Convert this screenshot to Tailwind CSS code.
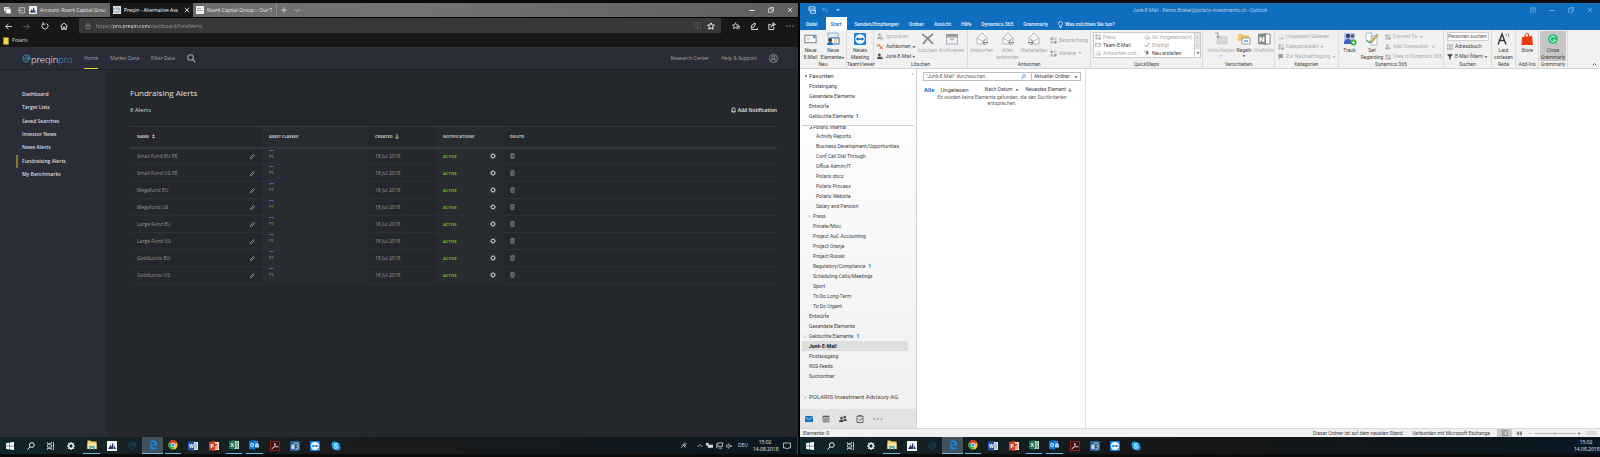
<!DOCTYPE html>
<html lang="de">
<head>
<meta charset="utf-8">
<title>Desktop</title>
<script src="https://cdn.jsdelivr.net/npm/@tailwindcss/browser@4"></script>
</head>
<body class="bg-[#0b0b0b] font-['Open_Sans','Noto_Sans',sans-serif] text-[5px] leading-[7px]">
<svg class="hidden">
  <symbol id="mail" viewBox="0 0 14 12"><rect x="1" y="2" width="12" height="8" fill="#fff" stroke="#777"/><path d="M3 5h4M3 7h3" stroke="#bbb"/><rect x="10" y="3" width="2" height="2" fill="#1673c4"/></symbol>
  <symbol id="reply" viewBox="0 0 14 14"><path d="M2 6l5-5 5 5v6H2z" fill="#f8f8f8" stroke="#b5b5b5"/><path d="M2 6l5 3 5-3" fill="none" stroke="#b5b5b5"/><path d="M10 8l-2.500 2.500L10 13M8 10.500h5" fill="none" stroke="#8c8c8c"/></symbol>
  <symbol id="person" viewBox="0 0 8 8"><circle cx="3" cy="2" r="1.6" fill="currentColor"/><path d="M0 7q0-3 3-3t3 3z" fill="currentColor"/><circle cx="6" cy="6" r="1.3" fill="none" stroke="currentColor" stroke-width=".7"/></symbol>
  <symbol id="grid" viewBox="0 0 8 8"><rect x=".5" y=".5" width="3" height="3" fill="#aaa"/><rect x="4.500" y=".5" width="3" height="3" fill="#ccc"/><rect x=".5" y="4.500" width="3" height="3" fill="#bbb"/><rect x="4.500" y="4.500" width="3" height="3" fill="#999"/></symbol>
  <symbol id="win" viewBox="0 0 8 8"><path d="M0 1.200l3.600-.6v3.200H0zM4 .5L8 0v3.800H4zM0 4.200h3.600v3.200L0 6.900zM4 4.200h4V8l-4-.5z" fill="#fff"/></symbol>
  <symbol id="lens" viewBox="0 0 8 8"><circle cx="4.800" cy="3" r="2.400" fill="none" stroke="currentColor" stroke-width=".9"/><path d="M3 4.800L.6 7.400" stroke="currentColor"/></symbol>
  <symbol id="task" viewBox="0 0 8 8"><path d="M.5 0v1.500h4V0M.5 8V6.500h4V8M.5 2.800h4v2.400h-4zM6.500 0v8M5.800 3.500h1.400" fill="none" stroke="#ddd" stroke-width=".8"/></symbol>
  <symbol id="gear" viewBox="0 0 8 8"><circle cx="4" cy="4" r="2.300" fill="none" stroke="currentColor" stroke-width="1.300"/><path d="M4 0v1.500M4 6.500V8M0 4h1.500M6.500 4H8M1.200 1.200l1 1M5.800 5.800l1 1M6.800 1.200l-1 1M2.200 5.800l-1 1" stroke="currentColor" stroke-width="1.200"/></symbol>
  <symbol id="explorer" viewBox="0 0 10 9"><path d="M.5 0h3l1 1h5v7.500h-9z" fill="#f4cf63"/><path d="M.5 2.500h9v6h-9z" fill="#fbe493"/><path d="M2.500 9V5.500h5V9H6V7H4v2z" fill="#3fa0dc"/></symbol>
  <symbol id="peaks" viewBox="0 0 10 10"><rect width="10" height="10" fill="#eef1f5"/><path d="M1 8l2.500-4L5 6V2l1.500 1.500L9 8z" fill="#20355c"/><path d="M6.500 3v5" stroke="#eef1f5" stroke-width=".6"/></symbol>
  <symbol id="at" viewBox="0 0 10 10"><circle cx="5" cy="5" r="1.800" fill="none" stroke="currentColor" stroke-width=".9"/><path d="M7 3v3q1 1.400 2-.6A4 4 0 1 0 7 8.500" fill="none" stroke="currentColor" stroke-width=".9"/></symbol>
  <symbol id="edge" viewBox="0 0 10 10"><path d="M.8 4.800C1 1.800 3 .3 5.200.3 8 .3 9.400 2.500 9.300 5.600H3.600c.2 2.400 3 2.600 5.100 1.400v2C5.500 10.400 1.600 9.600 1.700 6c.1-1.500 1-2.400 2.300-3-.4.500-.5.900-.5 1.300h3.300c.1-2.600-4-2.700-6 .5z" fill="#1283e0"/></symbol>
  <symbol id="chrome" viewBox="0 0 10 10"><circle cx="5" cy="5" r="4.600" fill="#f3c91f"/><path d="M5 5L1 2.700A4.600 4.600 0 0 1 9 2.700z" fill="#e0402f"/><path d="M1 2.700A4.600 4.600 0 0 0 4.800 9.600L6.500 6z" fill="#2ea350"/><path d="M1 2.700L5 5l4-2.300z" fill="#e0402f"/><circle cx="5" cy="5" r="2.200" fill="#fff"/><circle cx="5" cy="5" r="1.600" fill="#3e7fe8"/></symbol>
  <symbol id="acro" viewBox="0 0 10 10"><rect x=".4" y=".4" width="9.200" height="9.200" fill="#3a0b0c" stroke="#a3262a" stroke-width=".8"/><path d="M1.800 7.800C4 7 5.600 4 4.800 2c-.6 1.500 1 4 3.400 3.800C6 5.500 3.500 6 1.800 7.800" fill="none" stroke="#e8e8e8" stroke-width=".7"/></symbol>
  <symbol id="blueapp" viewBox="0 0 10 10"><rect width="10" height="10" rx="1" fill="#2c6098"/><path d="M1.500 3.500h3V8h-3z" fill="#c7dced"/><path d="M4 2.200h3.500a1.500 1.500 0 0 1 0 2.800H6.500M5.500 8H7a1.500 1.500 0 0 0 0-3" fill="none" stroke="#c7dced" stroke-width=".9"/></symbol>
  <symbol id="tv" viewBox="0 0 10 10"><rect width="10" height="10" rx="1" fill="#1480e6"/><circle cx="5" cy="5" r="4" fill="#fff"/><path d="M1.500 5l2-1.600v1h3v-1l2 1.600-2 1.600v-1h-3v1z" fill="#0d66c4"/></symbol>
  <symbol id="skype" viewBox="0 0 10 10"><circle cx="3.400" cy="3.400" r="2.900" fill="#16a5e8"/><circle cx="6.600" cy="6.600" r="2.900" fill="#16a5e8"/><circle cx="5" cy="5" r="4" fill="#16a5e8"/><path d="M6.800 3.500C6 2.300 3.300 2.500 3.400 3.900 3.500 5.200 6.700 4.700 6.700 6.200 6.600 7.700 3.800 7.700 3.200 6.300" fill="none" stroke="#fff"/></symbol>
  <symbol id="word" viewBox="0 0 10 10"><rect x="5" y="1" width="5" height="8" fill="#dfe8f6"/><path d="M6 3h3M6 5h3M6 7h3" stroke="#2b579a" stroke-width=".6"/><path d="M0 1l6-1v10L0 9z" fill="#2b579a"/><text x="1" y="7" font-size="5" font-weight="700" fill="#fff">W</text></symbol>
  <symbol id="ppt" viewBox="0 0 10 10"><rect x="5" y="1" width="5" height="8" fill="#f9e1da"/><circle cx="7" cy="4" r="1.500" fill="#d24726"/><path d="M6 7h3" stroke="#d24726"/><path d="M0 1l6-1v10L0 9z" fill="#d24726"/><text x="1.500" y="7" font-size="5" font-weight="700" fill="#fff">P</text></symbol>
  <symbol id="excel" viewBox="0 0 10 10"><rect x="5" y="1" width="5" height="8" fill="#dcefe3"/><path d="M6 3h3.500M6 5h3.500M6 7h3.500M8 1v8" stroke="#217346" stroke-width=".6"/><path d="M0 1l6-1v10L0 9z" fill="#217346"/><text x="1.500" y="7" font-size="5" font-weight="700" fill="#fff">X</text></symbol>
  <symbol id="olk" viewBox="0 0 10 10"><path d="M5 1h4v3H5z" fill="#2a8ad4"/><path d="M5 3.500h5v4H5z" fill="#e6f1fb" stroke="#1b78cc" stroke-width=".5"/><path d="M5 4l3 2 2-2" fill="none" stroke="#1b78cc" stroke-width=".6"/><path d="M0 1l6-1v10L0 9z" fill="#0f70c8"/><text x="1" y="7" font-size="5" font-weight="700" fill="#fff">O</text></symbol>
  <symbol id="pencil" viewBox="0 0 6 6"><path d="M.6 5.400l.4-1.600L4.200.6l1.200 1.200L2.200 5z" fill="none" stroke="currentColor" stroke-width=".8"/></symbol>
  <symbol id="trash" viewBox="0 0 6 7"><path d="M.3 1.300h5.400M2 1V.4h2V1M1 1.500l.3 5h3.400l.3-5M2.300 2.500v3M3.700 2.500v3" fill="none" stroke="currentColor" stroke-width=".7"/></symbol>
  <symbol id="sort" viewBox="0 0 4 6"><path d="M0 2.500L2 .2l2 2.300zM0 3.500h4L2 5.800z" fill="#ddd"/></symbol>
  <symbol id="star" viewBox="0 0 8 8"><path d="M4 .8l1 2.200 2.400.2-1.800 1.600.6 2.400L4 6 1.800 7.200l.6-2.400L.6 3.200 3 3z" fill="none" stroke="currentColor" stroke-width=".9"/></symbol>
  <symbol id="restore" viewBox="0 0 6 6"><path d="M.5 1.800h3.600v3.600H.5zM1.800 1.600V.5h3.700v3.700H4.300" fill="none" stroke="currentColor" stroke-width=".7"/></symbol>
  <symbol id="x" viewBox="0 0 6 6"><path d="M.8.8l4.400 4.400M5.200.8L.8 5.200" stroke="currentColor" stroke-width=".8"/></symbol>
  <symbol id="min" viewBox="0 0 6 6"><path d="M.5 3.500h5" stroke="currentColor"/></symbol>
  <symbol id="tri" viewBox="0 0 4 4"><path d="M.6 3.600h3V.6z" fill="#333"/></symbol>
  <symbol id="open" viewBox="0 0 4 4"><path d="M1.200.3L3 2 1.200 3.700z" fill="none" stroke="#999" stroke-width=".5"/></symbol>
  <symbol id="dn" viewBox="0 0 4 4"><path d="M.5 1.200h3L2 3z" fill="currentColor"/></symbol>
  <symbol id="page" viewBox="0 0 8 8"><rect x=".5" y=".5" width="7" height="7" fill="#f7d34e"/></symbol>
</svg>

<main class="flex min-h-[457px] pt-[3px] pb-[3px]">

<!-- Browser window -->
<section class="flex w-1/2 min-w-0 flex-col border-r-2 border-black text-[#d6d6d6]" aria-label="Browser">
  <div class="flex h-[14px] items-stretch bg-linear-to-r from-[#626262] via-[#747474] to-[#5e5e5e] text-[#e8e8e8]">
    <div class="flex w-[28px] items-center justify-around">
      <svg class="size-[7px]" viewBox="0 0 8 8"><path d="M0 0h6v5H0z" fill="#ddd"/><path d="M2 2h6v5.500H2z" fill="#fff" stroke="#666" stroke-width=".5"/></svg>
      <svg class="size-[7px]" viewBox="0 0 8 8"><path d="M1.500 2V.8h6v6h-6V5.500M5.500 3.800H.5M2.300 2L.5 3.800l1.800 1.800" fill="none" stroke="#ddd" stroke-width=".8"/></svg>
    </div>
    <button class="flex w-[82px] items-center gap-[3px] whitespace-nowrap px-[1px] text-left"><svg class="size-[8px] shrink-0"><use href="#peaks"/></svg>Account: Roark Capital Grou</button>
    <div class="flex w-[83px] items-center gap-[3px] bg-[#171717] px-[3px] text-white">
      <svg class="size-[8px] shrink-0" viewBox="0 0 8 8"><rect width="8" height="8" fill="#ddd"/><path d="M1 2h5v4H1zM3 3h4" fill="none" stroke="#8ab"/></svg>
      <button class="w-[58px] whitespace-nowrap text-left">Preqin - Alternative Ass</button>
      <button class="size-[6px]" aria-label="Tab schliessen"><svg class="size-[6px]"><use href="#x"/></svg></button>
    </div>
    <button class="flex w-[84px] items-center gap-[3px] whitespace-nowrap border-r border-[#8a8a8a] px-[3px] text-left"><svg class="size-[8px] shrink-0" viewBox="0 0 8 8"><rect width="8" height="8" fill="#eee"/><path d="M1 2.500h4M1 4.500h6" stroke="#aaa"/></svg>Roark Capital Group :: Our T</button>
    <button class="w-[13px]" aria-label="Neuer Tab"><svg class="mx-auto size-[6px]" viewBox="0 0 6 6"><path d="M3 .3v5.400M.3 3h5.400" stroke="#ddd" stroke-width=".8"/></svg></button>
    <button class="w-[13px]" aria-label="Tabliste"><svg class="mx-auto size-[6px]" viewBox="0 0 6 6"><path d="M.5 2L3 4.500 5.500 2" fill="none" stroke="#ccc" stroke-width=".8"/></svg></button>
    <div class="ml-auto flex items-center gap-[13px] pr-[5px]">
      <button aria-label="Minimieren"><svg class="size-[6px]"><use href="#min"/></svg></button>
      <button aria-label="Wiederherstellen"><svg class="size-[6px]"><use href="#restore"/></svg></button>
      <button aria-label="Schliessen"><svg class="size-[6px]"><use href="#x"/></svg></button>
    </div>
  </div>
  <div class="flex h-[17px] items-stretch border-t border-black bg-[#171717]">
    <div class="flex w-[79px] items-center gap-[11px] pl-[5px]">
      <button aria-label="Zurück"><svg class="size-[7px]" viewBox="0 0 8 8"><path d="M8 4H1M4 .8L.8 4 4 7.200" fill="none" stroke="#e6e6e6"/></svg></button>
      <button aria-label="Vorwärts"><svg class="size-[7px]" viewBox="0 0 8 8"><path d="M0 4h7M4 .8L7.200 4 4 7.200" fill="none" stroke="#5a5a5a"/></svg></button>
      <button aria-label="Neu laden"><svg class="size-[8px]" viewBox="0 0 8 8"><path d="M5.500 1.400A3 3 0 1 1 2 1.800M2 0v2.200h2.200" fill="none" stroke="#e6e6e6" stroke-width=".9"/></svg></button>
      <button aria-label="Startseite"><svg class="size-[8px]" viewBox="0 0 8 8"><path d="M.6 4L4 1l3.400 3M1.600 3.400v4h1.700V5h1.400v2.400h1.700v-4" fill="none" stroke="#e6e6e6" stroke-width=".9"/></svg></button>
    </div>
    <div class="mb-[1px] flex flex-1 items-center bg-[#383838] pl-[6px] pr-[6px]">
      <svg class="mr-[5px] size-[6px]" viewBox="0 0 6 6"><path d="M1 2.500h4v3H1zM1.800 2.500V1.200Q3-.2 4.200 1.200v1.300" fill="none" stroke="#999" stroke-width=".6"/></svg>
      <input aria-label="Adresse" class="h-[10px] min-w-0 flex-1 bg-[linear-gradient(to_right,#a0a0a0_17px,#fff_17px,#fff_54px,#a0a0a0_54px)] bg-clip-text text-transparent" value="https://pro.preqin.com/dashboard/fundAlerts">
      <svg class="mr-[6px] size-[7px]" viewBox="0 0 8 8"><path d="M.5 1h7v6h-7zM4 1v6" fill="none" stroke="#5c5c5c" stroke-width=".8"/></svg>
      <button class="text-white" aria-label="Favorit"><svg class="size-[8px]"><use href="#star"/></svg></button>
    </div>
    <div class="flex items-center gap-[10px] pl-[11px] pr-[4px]">
      <button aria-label="Favoriten"><svg class="size-[8px]" viewBox="0 0 8 8"><path d="M3.500.8l.9 2 2.100.2L5 4.500l.4 2.200-1.900-1.200-1.900 1.200.4-2.200L.5 3l2.100-.2zM5.500 4.500H8M6 6h2" fill="none" stroke="#eee" stroke-width=".8"/></svg></button>
      <button aria-label="Notiz"><svg class="size-[8px]" viewBox="0 0 8 8"><path d="M1 6l1-3 3-2 .5 1L4 5 2 6zM1 7.500h6.500V6" fill="none" stroke="#eee" stroke-width=".9"/></svg></button>
      <button aria-label="Teilen"><svg class="size-[8px]" viewBox="0 0 8 8"><path d="M3 2.500H.8v5h5V5M3 5.500Q3 2.500 6 2.500M5 .8l2.500 1.700L5 4.200z" fill="none" stroke="#eee" stroke-width=".9"/></svg></button>
      <button aria-label="Mehr"><svg class="size-[8px]" viewBox="0 0 8 8"><path d="M.5 4h1.300M3.400 4h1.300M6.300 4h1.300" stroke="#aaa"/></svg></button>
    </div>
  </div>
  <div class="flex h-[14px] items-center gap-[3px] border-b border-[#2e2f33] bg-[#171717] pl-[3px]"><svg class="h-[8px] w-[6px]" preserveAspectRatio="none" viewBox="0 0 8 8"><use href="#page"/></svg><a href="#">Polaris</a></div>

  <header class="flex h-[22px] items-stretch border-b border-[#1f2126] bg-[#2a2c37] pl-[22px] pr-[20px] text-[#a6a8ad]">
    <a href="#" class="mr-[12px] flex w-[50px] items-center text-[10px] leading-[12px]" aria-label="preqin pro"><svg class="size-[9px] shrink-0 text-[#3ba5cf]"><use href="#at"/></svg><span class="font-['Lato',sans-serif] font-light text-white">preqin<span class="text-[#3ba5cf]">pro</span></span></a>
    <nav class="flex gap-[12px] leading-[20px]">
      <a href="#" class="border-b border-[#f2d32c]">Home</a>
      <a href="#">Market Data</a>
      <a href="#">Filter Data</a>
      <button aria-label="Suchen"><svg class="size-[9px] -scale-x-100"><use href="#lens" /></svg></button>
    </nav>
    <div class="ml-auto flex items-center gap-[12px]">
      <a href="#">Research Center</a><a href="#">Help &amp; Support</a>
      <button aria-label="Konto"><svg class="size-[9px]" viewBox="0 0 9 9"><circle cx="4.500" cy="4.500" r="4" fill="none" stroke="#aaa" stroke-width=".7"/><circle cx="4.500" cy="3.500" r="1.400" fill="none" stroke="#aaa" stroke-width=".7"/><path d="M2 7.500q0-2.500 2.500-2.500T7 7.500" fill="none" stroke="#aaa" stroke-width=".7"/></svg></button>
    </div>
  </header>
  <div class="flex flex-1 bg-[#24272b]">
    <aside class="w-[107px] bg-[#2a2c36] pt-[18px] font-semibold text-[#dcdde0]">
      <nav class="flex h-[93px] flex-col justify-between pl-[16px] leading-[13px] *:border-l-2 *:pl-[4px]">
        <a href="#" class="border-transparent">Dashboard</a>
        <a href="#" class="border-transparent">Target Lists</a>
        <a href="#" class="border-transparent">Saved Searches</a>
        <a href="#" class="border-transparent">Investor News</a>
        <a href="#" class="border-transparent">News Alerts</a>
        <a href="#" class="border-[#857a35]">Fundraising Alerts</a>
        <a href="#" class="border-transparent">My Benchmarks</a>
      </nav>
    </aside>
    <div class="flex-1 pl-[23px] pr-[21px] pt-[16px]">
      <h1 class="text-[8px] leading-[14px] text-[#e4e4e4]">Fundraising Alerts</h1>
      <div class="mb-[11px] mt-[5px] flex items-center justify-between leading-[10px]">
        <p class="text-[6px]">8 Alerts</p>
        <button class="flex items-center gap-[2px] font-semibold text-[#ececec]"><svg class="h-[6px] w-[5px]" viewBox="0 0 5 6"><path d="M1 4.500V1.500Q2.500-.3 4 1.500v3M.2 4.700h4.600M2 5.600h1" fill="none" stroke="#eee" stroke-width=".8"/></svg>Add Notification</button>
      </div>
      <table class="w-full table-fixed border-collapse text-left text-[#96989c]">
        <colgroup><col class="w-[132px]"><col class="w-[106px]"><col class="w-[68px]"><col class="w-[67px]"><col></colgroup>
        <thead class="text-[4px] text-[#c4c5c7]">
          <tr class="h-[21px] border-b-2 border-t border-b-[#34373c] border-t-[#36393d]">
            <th class="pl-[7px]"><button class="flex items-center gap-[3px] font-bold">NAME <svg class="h-[5px] w-[3px]"><use href="#sort"/></svg></button></th>
            <th class="bg-[#282b2f] pl-[7px]">ASSET CLASSES</th>
            <th class="pl-[7px]"><button class="flex items-center gap-[2px] font-bold">CREATED <svg class="h-[5px] w-[4px]" viewBox="0 0 4 5"><path d="M2 0v4.500M.3 3L2 4.600 3.700 3" fill="none" stroke="#ddd" stroke-width=".8"/></svg></button></th>
            <th class="bg-[#282b2f] pl-[7px]">NOTIFICATIONS</th>
            <th class="pl-[7px]">DELETE</th>
          </tr>
        </thead>
        <tbody id="alerts"></tbody>
      </table>
    </div>
  </div>
  <div class="taskbar flex h-[17px] bg-linear-to-r from-[#10242a] via-[#1a1a1a] to-[#081822]" data-tray="full"></div>
</section>

<!-- Mail window -->
<section class="flex w-1/2 min-w-0 flex-col bg-white font-['Roboto','Open_Sans',sans-serif] text-[#444]" aria-label="Outlook">
  <div class="bg-[#106ebe] text-[#e9f2fa]">
    <div class="grid h-[14px] grid-cols-3 items-center text-[#a9cdec]">
      <div class="flex items-center gap-[6px] pl-[8px]">
        <button aria-label="Senden und Empfangen"><svg class="size-[8px]" viewBox="0 0 8 8"><path d="M1 .8h6v4H1zM1 3h6M2.500 5v2.300h5V4.500H5" fill="none" stroke="#d8e9f7" stroke-width=".8"/></svg></button>
        <button aria-label="Rückgängig"><svg class="size-[6px]" viewBox="0 0 6 6"><path d="M2.200.5L.5 2.200l1.700 1.700M.6 2.200H4Q6 3.500 4 5.500" fill="none" stroke="#5fa3dc" stroke-width=".8"/></svg></button>
        <button aria-label="Anpassen" class="pl-[2px] text-white"><svg class="size-[4px]"><use href="#dn"/></svg></button>
      </div>
      <h2 class="whitespace-nowrap text-center">Junk-E-Mail - Fenno.Brakel@polaris-investments.ch - Outlook</h2>
      <div class="flex items-center justify-end gap-[13px] pr-[7px] text-[#78b2e2]">
        <button aria-label="Menüband"><svg class="size-[6px]" viewBox="0 0 6 6"><path d="M.4.800h5.200v4.400H.4zM.4 2h5.200M3 4.600V2.800" fill="none" stroke="currentColor" stroke-width=".6"/></svg></button>
        <button aria-label="Minimieren"><svg class="size-[6px]"><use href="#min"/></svg></button>
        <button aria-label="Wiederherstellen"><svg class="size-[6px]"><use href="#restore"/></svg></button>
        <button aria-label="Schliessen"><svg class="size-[6px]"><use href="#x"/></svg></button>
      </div>
    </div>
    <nav class="flex h-[13px] items-stretch pl-[1px] font-medium *:px-[5px] *:pt-[1px]">
      <button>Datei</button>
      <button class="mx-[3px] bg-white text-[#106ebe]">Start</button>
      <button>Senden/Empfangen</button>
      <button>Ordner</button>
      <button>Ansicht</button>
      <button>Hilfe</button>
      <button>Dynamics 365</button>
      <button>Grammarly</button>
      <button class="flex items-center gap-[2px]"><svg class="h-[7px] w-[5px]" viewBox="0 0 5 7"><path d="M1.500 4.500Q-.4 2.500 1 1q1.500-1.200 3 0 1.400 1.500-.5 3.500v1h-2zM1.700 6.500h1.600" fill="none" stroke="#fff" stroke-width=".7"/></svg>Was möchten Sie tun?</button>
    </nav>
  </div>

  <!-- Ribbon: each group holds a row of commands above its caption -->
  <div class="flex h-[39px] border-b border-[#d5d5d5] bg-[#f1f1f1] *:flex *:shrink-0 *:flex-col *:border-r *:border-[#dcdcdc]">
    <div class="w-[47px]">
      <div class="flex h-[31px] pt-[2px]">
        <button class="flex w-[21px] flex-col items-center text-center"><svg class="mb-[1px] h-[14px] w-[13px]"><use href="#mail"/></svg>Neue<br>E-Mail</button>
        <button class="flex w-[24px] flex-col items-center whitespace-nowrap text-center"><svg class="mb-[1px] size-[14px]" viewBox="0 0 14 14"><rect x="2" y="1" width="10" height="5" fill="#e3ecf5" stroke="#7aa7d0" stroke-width=".8"/><rect x="5" y="6" width="8" height="6" fill="#fff" stroke="#1673c4"/><circle cx="4" cy="8" r="2" fill="#444"/><path d="M1 13q0-3 3-3t3 3z" fill="#1673c4"/><path d="M8 8h3M8 10h3" stroke="#f0a030"/></svg>Neue<span class="flex items-center">Elemente<svg class="size-[4px]"><use href="#dn"/></svg></span></button>
      </div><span class="text-center">Neu</span>
    </div>
    <div class="w-[27px]">
      <div class="flex h-[31px] justify-center pt-[2px]">
        <button class="flex flex-col items-center text-center"><svg class="mb-[1px] h-[14px] w-[12px]"><use href="#tv"/></svg>Neues<br>Meeting</button>
      </div><span class="text-center">TeamViewer</span>
    </div>
    <div class="w-[94px]">
      <div class="flex h-[31px] pt-[2px]">
        <div class="flex w-[42px] flex-col justify-between whitespace-nowrap pl-[3px] leading-[9px] *:flex *:items-center *:gap-[1px]">
          <button class="text-[#b0b0b0]"><svg class="mr-[1px] size-[7px]"><use href="#person"/></svg>Ignorieren</button>
          <button><svg class="mr-[1px] size-[7px]" viewBox="0 0 8 8"><path d="M0 1h4v3H0z" fill="#f0b050"/><path d="M3 4l4 3M7 3L3 7" stroke="#d9502e"/></svg>Aufräumen<svg class="size-[4px]"><use href="#dn"/></svg></button>
          <button><svg class="mr-[1px] size-[7px]"><use href="#person"/></svg>Junk-E-Mail<svg class="size-[4px]"><use href="#dn"/></svg></button>
        </div>
        <button class="flex w-[23px] flex-col items-center text-[#a9a9a9]"><svg class="mb-[1px] size-[14px]" viewBox="0 0 14 14"><path d="M1 2q6 4 11 10M12 2Q6 6 2 12" fill="none" stroke="#8a8a8a" stroke-width="1.800"/></svg>Löschen</button>
        <button class="flex w-[25px] flex-col items-center text-[#a9a9a9]"><svg class="mb-[1px] size-[14px]" viewBox="0 0 14 14"><rect x="1" y="2" width="12" height="3" fill="#999"/><rect x="1.500" y="5" width="11" height="7" fill="#f0eaf2" stroke="#b8b0ba"/><path d="M5 7h4" stroke="#999"/></svg>Archivieren</button>
      </div><span class="text-center">Löschen</span>
    </div>
    <div class="w-[123px]">
      <div class="flex h-[31px] pt-[2px] text-[#a9a9a9]">
        <button class="flex w-[27px] flex-col items-center"><svg class="mb-[1px] size-[14px]"><use href="#reply"/></svg>Antworten</button>
        <button class="flex w-[25px] flex-col items-center"><svg class="mb-[1px] size-[14px]"><use href="#reply"/></svg>Allen<br>antworten</button>
        <button class="flex w-[28px] flex-col items-center"><svg class="mb-[1px] size-[14px] -scale-x-100"><use href="#reply"/></svg>Weiterleiten</button>
        <div class="flex flex-col justify-center gap-[4px] whitespace-nowrap pl-[2px] leading-[9px] *:flex *:items-center *:gap-[2px]">
          <button><svg class="size-[7px]"><use href="#grid"/></svg>Besprechung</button>
          <button><svg class="size-[7px]"><use href="#grid"/></svg>Weitere<svg class="size-[4px]"><use href="#dn"/></svg></button>
        </div>
      </div><span class="text-center">Antworten</span>
    </div>
    <div class="w-[112px]">
      <div class="flex h-[31px] pl-[2px] pr-[1px] pt-[2px]">
        <div class="grid h-[26px] flex-1 grid-cols-[49px_1fr] items-center whitespace-nowrap border border-[#c9c9c9] bg-white pl-[1px] leading-[8px] *:flex *:items-center *:gap-[2px]">
          <button class="text-[#a9a9a9]"><svg class="size-[6px]"><use href="#grid"/></svg>Press</button>
          <button class="text-[#a9a9a9]"><svg class="size-[6px]"><use href="#reply"/></svg>An Vorgesetzte(n)</button>
          <button><svg class="size-[6px]"><use href="#mail"/></svg>Team-E-Mail</button>
          <button class="text-[#a9a9a9]"><svg class="size-[6px]" viewBox="0 0 6 6"><path d="M.5 3L2.500 5 5.500.8" fill="none" stroke="#999"/></svg>Erledigt</button>
          <button class="text-[#a9a9a9]"><svg class="size-[6px]"><use href="#reply"/></svg>Antworten und...</button>
          <button><svg class="size-[6px]" viewBox="0 0 6 6"><path d="M3.500 0L1.500 3H3L2 6l3-3.500H3.500z" fill="#444"/><path d="M0 1h2" stroke="#f0b030"/></svg>Neu erstellen</button>
        </div>
        <div class="flex h-[26px] w-[6px] flex-col border border-l-0 border-[#c9c9c9] *:flex *:flex-1 *:items-center *:justify-center"><button aria-label="Nach oben" class="bg-[#e3e3e3] text-[#aaa]"><svg class="size-[3px] rotate-180"><use href="#dn"/></svg></button><button aria-label="Nach unten" class="bg-[#e3e3e3] text-[#aaa]"><svg class="size-[3px]"><use href="#dn"/></svg></button><button aria-label="Alle anzeigen" class="bg-white"><svg class="size-[4px]"><use href="#dn"/></svg></button></div>
      </div><span class="text-center">QuickSteps</span>
    </div>
    <div class="w-[72px]">
      <div class="flex h-[31px] pl-[4px] pt-[2px]">
        <button class="flex w-[28px] flex-col items-center text-[#b0b0b0]"><svg class="mb-[1px] size-[14px]" viewBox="0 0 14 14"><path d="M3 4h4l1 1h5v7H3z" fill="#dcd3dc" stroke="#c4bcc4" stroke-width=".6"/><path d="M1 1h3v5M2.500 4.500L4 6l1.500-1.500" fill="none" stroke="#999"/></svg>Verschieben<svg class="size-[4px]"><use href="#dn"/></svg></button>
        <button class="flex w-[18px] flex-col items-center"><svg class="mb-[1px] size-[14px]" viewBox="0 0 14 14"><path d="M1 2h4l1 1h6v6H1z" fill="#f2c572"/><rect x="5" y="6" width="8" height="6" fill="#fff" stroke="#888" stroke-width=".8"/><path d="M7 9h4" stroke="#1673c4"/></svg>Regeln<svg class="size-[4px]"><use href="#dn"/></svg></button>
        <button class="flex w-[21px] flex-col items-center text-[#b0b0b0]"><svg class="mb-[1px] size-[14px]" viewBox="0 0 14 14"><path d="M8 2h5v10H8z" fill="#fff" stroke="#888"/><path d="M1 2l8-1v12l-8-1z" fill="#8c8c8c"/><text x="2" y="10" font-size="8" font-weight="700" fill="#fff">N</text></svg>OneNote</button>
      </div><span class="text-center">Verschieben</span>
    </div>
    <div class="w-[64px]">
      <div class="flex h-[31px] flex-col justify-between whitespace-nowrap pl-[3px] pt-[2px] leading-[9px] text-[#ababab] *:flex *:items-center *:gap-[2px]">
        <button><svg class="size-[6px]"><use href="#reply"/></svg>Ungelesen/Gelesen</button>
        <button><svg class="size-[6px]"><use href="#grid"/></svg>Kategorisieren<svg class="size-[4px]"><use href="#dn"/></svg></button>
        <button><svg class="size-[6px]" viewBox="0 0 6 6"><path d="M1 0v6M1 .5h4L4 2l1 1.500H1z" fill="#999" stroke="#888" stroke-width=".5"/></svg>Zur Nachverfolgung<svg class="size-[4px]"><use href="#dn"/></svg></button>
      </div><span class="text-center">Kategorien</span>
    </div>
    <div class="w-[105px]">
      <div class="flex h-[31px] pt-[2px]">
        <button class="flex w-[21px] flex-col items-center"><svg class="mb-[1px] size-[14px]" viewBox="0 0 14 14"><rect x="1" y="1" width="11" height="11" fill="#b9c6e8"/><circle cx="5" cy="4" r="2.200" fill="#30406c"/><path d="M1 12q0-5 4-5t4 5z" fill="#3f62c4"/><circle cx="9.500" cy="4" r="1.800" fill="#555"/><circle cx="10.500" cy="10.500" r="3" fill="#3fae3a"/><path d="M9 10.500h3M10.500 9v3" stroke="#fff"/></svg>Track</button>
        <button class="flex w-[24px] flex-col items-center text-center"><svg class="mb-[1px] size-[14px]" viewBox="0 0 14 14"><path d="M1 1h6v8H1zM6 4h6v9H6z" fill="#fff" stroke="#8fb0c4" stroke-width=".8"/><path d="M5 10l7-8 1 1-6 8z" fill="#e8b73c" stroke="#7c6a30" stroke-width=".4"/><path d="M2 8l2 3 2-2" fill="none" stroke="#3f9a4a"/></svg>Set<br>Regarding</button>
        <div class="flex flex-col justify-between whitespace-nowrap pl-[1px] leading-[9px] text-[#ababab] *:flex *:items-center *:gap-[2px]">
          <button><svg class="size-[6px]"><use href="#grid"/></svg>Convert To<svg class="size-[4px]"><use href="#dn"/></svg></button>
          <button><svg class="size-[6px]"><use href="#person"/></svg>Add Connection<svg class="size-[4px]"><use href="#dn"/></svg></button>
          <button><svg class="size-[6px]"><use href="#grid"/></svg>View in Dynamics 365</button>
        </div>
      </div><span class="text-center">Dynamics 365</span>
    </div>
    <div class="w-[48px]">
      <div class="flex h-[31px] flex-col justify-between whitespace-nowrap pl-[3px] pr-[2px] pt-[2px] leading-[9px]">
        <input aria-label="Personen suchen" placeholder="Personen suchen" class="h-[9px] w-full border border-[#d0d0d0] bg-white placeholder:text-[#555]">
        <button class="flex items-center gap-[2px]"><svg class="size-[6px]" viewBox="0 0 6 6"><path d="M0 .8h6v4.400H0z" fill="#dbe7f2" stroke="#777" stroke-width=".5"/><path d="M3 1v4" stroke="#777" stroke-width=".5"/></svg>Adressbuch</button>
        <button class="flex items-center gap-[1px]"><svg class="mr-[1px] size-[6px]" viewBox="0 0 6 6"><path d="M0 .3h6L3.700 3v2.800L2.300 5V3z" fill="#444"/></svg>E-Mail filtern<svg class="size-[4px]"><use href="#dn"/></svg></button>
      </div><span class="text-center">Suchen</span>
    </div>
    <div class="w-[24px]">
      <div class="flex h-[31px] justify-center pt-[2px]"><button class="flex flex-col items-center text-center"><svg class="mb-[1px] size-[14px]" viewBox="0 0 14 14"><path d="M2 12.500L6 2l4 10.500M3.500 8.500h5" fill="none" stroke="#333" stroke-width="1.400"/><path d="M10 1.500q1 1.500 0 3M12 1q1.500 2.200 0 4.500" fill="none" stroke="#777" stroke-width=".7"/></svg>Laut<br>vorlesen</button></div><span class="text-center">Rede</span>
    </div>
    <div class="w-[23px]">
      <div class="flex h-[31px] justify-center pt-[2px]"><button class="flex flex-col items-center"><svg class="mb-[1px] size-[14px]" viewBox="0 0 14 14"><path d="M2 5l10-1 1 9H1.500z" fill="#e43c0c"/><path d="M5 6V3Q6.500 0 8.500 2v3" fill="none" stroke="#e43c0c"/></svg>Store</button></div><span class="text-center">Add-Ins</span>
    </div>
    <div class="w-[29px]">
      <div class="flex h-[31px] justify-center pt-[1px]"><button class="flex w-[26px] flex-col items-center bg-[#c6c6c6] pt-[1px] text-center"><svg class="mb-[1px] size-[14px]" viewBox="0 0 14 14"><circle cx="7" cy="7" r="4.800" fill="#15c26b"/><path d="M9 5.300A2.700 2.700 0 1 0 9.500 8H7.500" fill="none" stroke="#fff"/></svg>Close<br>Grammarly</button></div><span class="text-center">Grammarly</span>
    </div>
    <div class="flex-1 items-end justify-end border-none pb-[1px] pr-[3px]"><button aria-label="Menüband reduzieren"><svg class="size-[5px]" viewBox="0 0 6 6"><path d="M.8 4L3 1.800 5.200 4" fill="none" stroke="#444"/></svg></button></div>
  </div>

  <div class="flex flex-1">
    <aside class="flex w-[117px] shrink-0 flex-col border-r border-[#d2d2d2] bg-linear-to-b from-white to-[#efefef]">
      <div class="flex h-[12px] items-center gap-[2px] pl-[4px] pr-[3px] text-[6px] text-[#333]"><svg class="size-[3px]"><use href="#tri"/></svg>Favoriten<button class="ml-auto pb-[3px] text-[5px]" aria-label="Ordnerbereich minimieren">‹</button></div>
      <nav class="mx-[2px] flex flex-col border-b border-[#cfcfcf] pb-[4px] pl-[7px] leading-[10px]">
        <a href="#">Posteingang</a><a href="#">Gesendete Elemente</a><a href="#">Entwürfe</a><a href="#">Gelöschte Elemente <b class="pl-[1px] text-[#1673c4]">1</b></a>
      </nav>
      <nav id="folders" class="flex flex-col leading-[10px]"></nav>
      <a href="#" class="mt-[11px] flex items-center gap-[2px] pl-[4px] text-[6px] leading-[10px]"><svg class="size-[3px]"><use href="#open"/></svg>POLARIS Investment Advisory AG</a>
      <div class="mt-auto flex h-[19px] items-center gap-[9px] bg-[#e3e3e3] pl-[5px] text-[#444]">
        <button aria-label="E-Mail"><svg class="h-[6px] w-[8px]" viewBox="0 0 8 6"><path d="M0 0h8v6H0z" fill="#1673c4"/><path d="M0 .8L4 3.500 8 .8" fill="none" stroke="#e3e3e3" stroke-width=".7"/></svg></button>
        <button aria-label="Kalender"><svg class="size-[8px]" viewBox="0 0 8 8"><path d="M1 1h6v6H1zM1 3h6M3 3v4M5 3v4M1 5h6" fill="none" stroke="#555" stroke-width=".6"/><path d="M1 1.500h6" stroke="#555"/></svg></button>
        <button aria-label="Personen"><svg class="size-[8px]" viewBox="0 0 8 8"><circle cx="2.500" cy="3" r="1.300" fill="#444"/><path d="M0 7q0-2.500 2.500-2.500T4.500 7z" fill="#444"/><circle cx="5.700" cy="2" r="1.300" fill="#444"/><path d="M4.500 5q0-1.500 1.500-1.500T8 6H5z" fill="#444"/></svg></button>
        <button aria-label="Aufgaben"><svg class="size-[8px]" viewBox="0 0 8 8"><path d="M1 1.200h6v6.300H1zM3 1.200V.4h2v.8M3 4.500l1 1 1.600-2.300" fill="none" stroke="#444" stroke-width=".8"/></svg></button>
        <button aria-label="Mehr"><svg class="h-[8px] w-[10px]" viewBox="0 0 10 8"><circle cx="1.500" cy="4" r=".8" fill="#777"/><circle cx="5" cy="4" r=".8" fill="#777"/><circle cx="8.500" cy="4" r=".8" fill="#777"/></svg></button>
      </div>
    </aside>
    <section class="w-[169px] shrink-0 border-r border-[#e0e0e0] pl-[6px] pr-[4px] pt-[3px]">
      <div class="flex h-[9px] border border-[#c0c0c0]">
        <input aria-label="Suche" placeholder="&quot;Junk-E-Mail&quot; durchsuchen" class="min-w-0 flex-1 pl-[2px] placeholder:text-[#666]">
        <button class="px-[5px] text-[#1673c4]" aria-label="Suchen"><svg class="size-[5px]"><use href="#lens"/></svg></button>
        <div class="flex w-[49px] items-center border-l border-[#c0c0c0] pr-[2px]">
          <select aria-label="Suchbereich" class="min-w-0 flex-1 appearance-none pl-[2px] leading-[7px]"><option>Aktueller Ordner</option></select><svg class="size-[4px]"><use href="#dn"/></svg>
        </div>
      </div>
      <div class="mt-[4px] flex items-center leading-[9px]">
        <button class="mr-[6px] pl-[1px] text-[6px] font-bold text-[#1673c4]">Alle</button>
        <button class="text-[6px]">Ungelesen</button>
        <button class="ml-auto mr-[7px] flex items-center gap-[2px]">Nach Datum<svg class="size-[4px]"><use href="#dn"/></svg></button>
        <button class="mr-[9px] flex items-center gap-[2px]">Neuestes Element <svg class="size-[4px]" viewBox="0 0 4 4"><path d="M2 0v3.600M.6 2.300L2 3.700l1.400-1.400" fill="none" stroke="#444" stroke-width=".7"/></svg></button>
      </div>
      <p class="px-[8px] text-center leading-[6px] text-[#666]">Es wurden keine Elemente gefunden, die den Suchkriterien<br>entsprechen.</p>
    </section>
    <section class="flex-1" aria-label="Lesebereich"></section>
  </div>
  <footer class="flex h-[9px] items-center border-t border-[#d8d8d8] bg-[#f1f1f1] pl-[3px] pr-[3px]">
    <span>Elemente: 0</span>
    <span class="ml-auto">Dieser Ordner ist auf dem neusten Stand.</span>
    <span class="ml-[8px]">Verbunden mit Microsoft Exchange</span>
    <button class="ml-[7px] flex h-[8px] w-[15px] items-center justify-center bg-[#c9c9c9]" aria-label="Normal"><svg class="size-[6px]" viewBox="0 0 6 6"><path d="M.5.500h5v5h-5zM2 .5v5" fill="none" stroke="#777" stroke-width=".7"/></svg></button>
    <svg class="mx-[5px] size-[5px]" viewBox="0 0 6 6"><path d="M0 .5h2.600v4.500H0zM3.400.5H6v4.500H3.400z" fill="#888"/></svg>
    <button aria-label="Verkleinern" class="w-[7px]">−</button>
    <span class="relative h-[7px] w-[42px]"><input type="range" aria-label="Zoom" class="absolute inset-0 w-full appearance-none opacity-0"><svg class="h-[7px] w-full" viewBox="0 0 42 7"><path d="M0 3.500h42M21 2v3" stroke="#aaa" stroke-width=".8"/></svg></span>
    <button aria-label="Vergrössern" class="w-[6px]">+</button>
    <span class="w-[15px] text-right text-[#b5b5b5]">100%</span>
  </footer>
  <div class="taskbar flex h-[17px] bg-linear-to-r from-[#10242a] via-[#161616] to-[#081822] font-['Open_Sans',sans-serif]" data-tray="clock"></div>
</section>
</main>

<script>
const alerts = ["Small Fund EU PE","Small Fund US PE","Megafund EU","Megafund US","Large Fund EU","Large Fund US","GoldiLocks EU","GoldiLocks US"];
document.getElementById("alerts").innerHTML = alerts.map(name => `
<tr class="h-[17px] border-b border-[#2c2f33]">
  <td class="pl-[7px] pr-[7px]"><div class="flex items-center justify-between">${name}<button aria-label="${name} bearbeiten"><svg class="size-[5px] text-[#b0b0b0]"><use href="#pencil"/></svg></button></div></td>
  <td class="bg-[#282b2f] pl-[7px] pt-[1px] align-top text-[4px]"><span class="block h-[1px] w-[5px] bg-[#3f5bd0]"></span><span class="block pt-[3px] leading-[6px]">PE</span></td>
  <td class="pl-[7px]">18 Jul 2018</td>
  <td class="bg-[#282b2f] pl-[7px] pr-[7px]"><div class="flex items-center justify-between text-[4px] font-bold text-[#6fb51f]">ACTIVE<button aria-label="${name} Einstellungen"><svg class="size-[6px] text-[#bdbdbd]"><use href="#gear"/></svg></button></div></td>
  <td class="pl-[7px]"><button class="block" aria-label="${name} löschen"><svg class="h-[6px] w-[5px] text-[#a0a0a0]"><use href="#trash"/></svg></button></td>
</tr>`).join("");

const level = {0:"flex items-center pl-[9px]",1:"flex items-center pl-[13px]",2:"flex items-center pl-[16px]"};
const folders = [[2,"Activity Reports"],[2,"Business Development/Opportunities"],[2,"Conf Call Dial Through"],[2,"Office Admin/IT"],[2,"Polaris docs"],[2,"Polaris Process"],[2,"Polaris Website"],[2,"Salary and Pension"],[1,"Press","open"],[1,"Private/Misc"],[1,"Project AuC Accounting"],[1,"Project Oranje"],[1,"Project Russki"],[1,"Regulatory/Compliance","",1],[1,"Scheduling Calls/Meetings"],[1,"Sport"],[1,"To Do Long-Term"],[1,"To Do Urgent"],[0,"Entwürfe"],[0,"Gesendete Elemente"],[0,"Gelöschte Elemente","open",1],[0,"Junk-E-Mail"],[0,"Postausgang"],[0,"RSS-Feeds"],[0,"Suchordner"]];
document.getElementById("folders").innerHTML =
  `<div class="flex h-[5px] items-end overflow-hidden"><a href="#" class="flex items-center gap-[1px] pl-[9px] leading-[7px]"><svg class="size-[3px]"><use href="#tri"/></svg>Polaris Internal</a></div>` +
  folders.map(([l, name, arrow, n]) => {
    const mark = arrow ? `<svg class="-ml-[5px] mr-[2px] size-[3px]"><use href="#open"/></svg>` : "";
    const count = n ? `<b class="pl-[3px] text-[#1673c4]">${n}</b>` : "";
    if (name === "Junk-E-Mail") return `<a href="#" class="ml-[2px] mr-[8px] bg-[#dedede] pl-[7px] font-bold text-[#222]">${name}</a>`;
    return `<a href="#" class="${level[l]}">${mark}${name}${count}</a>`;
  }).join("");

const apps = [["win","Start"],["lens","Suchen"],["task","Taskansicht"],["gear","Einstellungen"],["explorer","Explorer",1],["peaks","Dynamics"],["at","Mail"],["edge","Edge",2],["chrome","Chrome",1],["word","Word"],["ppt","PowerPoint"],["excel","Excel",1],["olk","Outlook",1],["acro","Acrobat"],["blueapp","App"],["tv","TeamViewer"],["skype","Skype"]];
const frame = ["flex items-center justify-center","flex items-center justify-center border-b border-[#76b9ed] mx-[2px]","flex items-center justify-center border-b border-[#76b9ed] bg-[#41525a]"];
document.querySelectorAll(".taskbar").forEach(bar => {
  const clock = `<div class="flex w-[24px] flex-col justify-center text-center text-[#e8e8e8]"><span>15:02</span><span>14.08.2018</span></div>`;
  const tray = `<div class="flex items-center gap-[3px] pr-[5px] text-[#ddd]">
    <svg class="mr-[7px] size-[7px]" viewBox="0 0 8 8"><path d="M1 7l2-2M3 3l3 3M4 2l2-1 1 1-1 2zM2 4q2-2 4 2" fill="none" stroke="currentColor" stroke-width=".8"/></svg>
    <svg class="size-[6px]" viewBox="0 0 6 6"><path d="M.5 4L3 1.500 5.500 4" fill="none" stroke="currentColor" stroke-width=".8"/></svg>
    <svg class="size-[7px]" viewBox="0 0 8 8"><path d="M2 3h6v3.500H2zM0 1h3v3H0z" fill="currentColor"/></svg>
    <svg class="size-[7px]" viewBox="0 0 8 8"><path d="M2 1h5.500v4H2zM3 7h4M.8 2v5" fill="none" stroke="currentColor" stroke-width=".9"/></svg>
    <svg class="size-[6px]" viewBox="0 0 6 6"><path d="M.3 2h1L3 .6v4.800L1.300 4h-1zM4 2l1.700 2M5.700 2L4 4" fill="none" stroke="currentColor" stroke-width=".7"/></svg>
    <span class="pl-[3px]">DEU</span></div>${clock}
    <button class="flex w-[21px] items-center justify-center border-r border-[#345] text-[#ddd]" aria-label="Mitteilungen"><svg class="size-[8px]" viewBox="0 0 8 8"><path d="M.5 1h7v5H5L4 7 3 6H.5z" fill="none" stroke="currentColor" stroke-width=".8"/></svg></button>`;
  bar.innerHTML = `<div class="grid w-[346px] grid-cols-[repeat(17,1fr)]">` + apps.map(([id, label, s = 0]) =>
    `<button class="${frame[s]}" aria-label="${label}"><svg class="${id === "at" ? "size-[9px] text-[#14506a]" : id === "lens" || id === "win" || id === "task" || id === "gear" ? "size-[8px] text-white" : "size-[10px]"}"><use href="#${id}"/></svg></button>`).join("") +
    `</div><div class="ml-auto flex">${bar.dataset.tray === "full" ? tray : clock + '<span class="w-[2px]"></span>'}</div>`;
});
</script>
</body>
</html>
